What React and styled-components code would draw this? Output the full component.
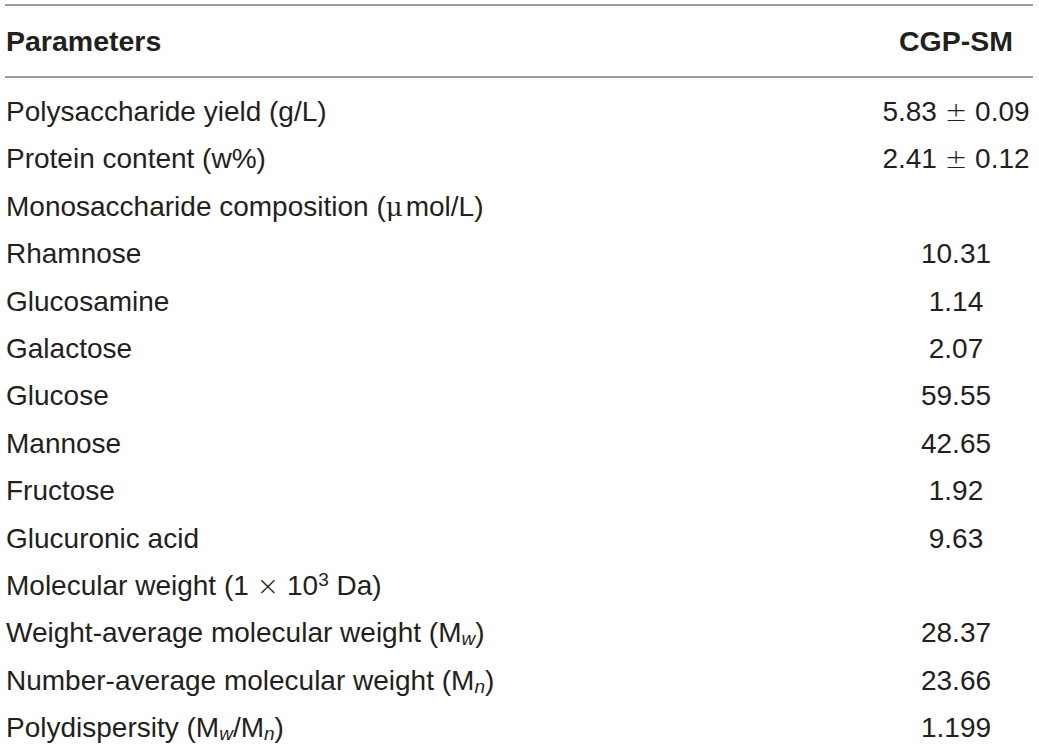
import React from 'react';
import styled, { createGlobalStyle } from 'styled-components';

const GlobalStyle = createGlobalStyle`
  html, body {
    margin: 0;
    padding: 0;
    background: #ffffff;
  }
  body {
    font-family: "Liberation Sans", Arial, Helvetica, sans-serif;
    color: #231f20;
  }
`;

const Table = styled.div`
  width: 1028px;
  margin-left: 5px;
  padding-top: 4px;
`;

const HeaderRow = styled.div`
  display: grid;
  grid-template-columns: 1fr 154px;
  align-items: center;
  height: 70px;
  border-top: 2px solid #9d9d9d;
  border-bottom: 2px solid #9d9d9d;
  font-size: 28.5px;
  font-weight: 700;
`;

const Body = styled.div`
  padding-top: 10px;
`;

const Row = styled.div`
  display: grid;
  grid-template-columns: 1fr 154px;
  align-items: center;
  height: 47.4px;
  font-size: 28px;
  line-height: 47.4px;
`;

const Label = styled.div`
  padding-left: 1px;
  white-space: nowrap;
`;

const Value = styled.div`
  text-align: center;
  white-space: nowrap;
`;

const Sym = styled.span`
  font-family: "DejaVu Sans", sans-serif;
  font-weight: 300;
  font-size: ${(p) => p.size || 28}px;
  margin: 0 ${(p) => p.gap || 0}px;
`;

const Mu = styled.span`
  font-family: "DejaVu Serif", serif;
  font-size: 26px;
  margin-right: 3px;
`;

const Sub = styled.sub`
  font-size: 19px;
  font-style: italic;
  vertical-align: -3px;
  line-height: 0;
`;

const Sup = styled.sup`
  font-size: 19px;
  vertical-align: 9px;
  line-height: 0;
`;

const pm = (a, b) => (
  <>
    {a} <Sym size={27}>{'\u00b1'}</Sym> {b}
  </>
);

const rows = [
  { label: 'Polysaccharide yield (g/L)', value: pm('5.83', '0.09') },
  { label: 'Protein content (w%)', value: pm('2.41', '0.12') },
  {
    label: (
      <>
        Monosaccharide composition (<Mu>{'\u03bc'}</Mu>mol/L)
      </>
    ),
    value: '',
  },
  { label: 'Rhamnose', value: '10.31' },
  { label: 'Glucosamine', value: '1.14' },
  { label: 'Galactose', value: '2.07' },
  { label: 'Glucose', value: '59.55' },
  { label: 'Mannose', value: '42.65' },
  { label: 'Fructose', value: '1.92' },
  { label: 'Glucuronic acid', value: '9.63' },
  {
    label: (
      <>
        Molecular weight (1 <Sym size={27}>{'\u00d7'}</Sym> 10<Sup>3</Sup> Da)
      </>
    ),
    value: '',
  },
  {
    label: (
      <>
        Weight-average molecular weight (M<Sub>w</Sub>)
      </>
    ),
    value: '28.37',
  },
  {
    label: (
      <>
        Number-average molecular weight (M<Sub>n</Sub>)
      </>
    ),
    value: '23.66',
  },
  {
    label: (
      <>
        Polydispersity (M<Sub>w</Sub>/M<Sub>n</Sub>)
      </>
    ),
    value: '1.199',
  },
];

const App = () => {
  return (
    <>
      <GlobalStyle />
      <Table>
        <HeaderRow>
          <Label>Parameters</Label>
          <Value>CGP-SM</Value>
        </HeaderRow>
        <Body>
          {rows.map((row, i) => (
            <Row key={i}>
              <Label>{row.label}</Label>
              <Value>{row.value}</Value>
            </Row>
          ))}
        </Body>
      </Table>
    </>
  );
};

export default App;
